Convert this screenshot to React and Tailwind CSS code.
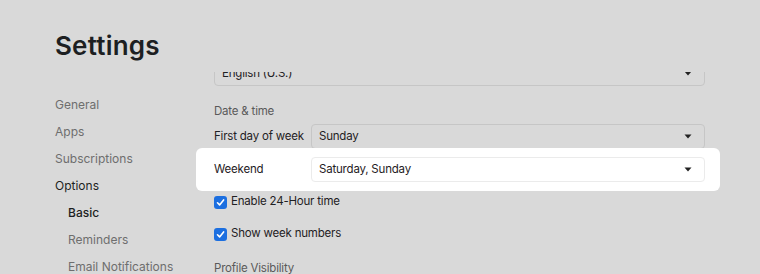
import React from 'react';

const Select = ({ value, white }) => (
  <div
    className={`flex-1 flex items-center justify-between h-[25px] rounded-[4px] border pl-[7px] pr-[12px] text-[11.5px] tracking-[-0.2px] text-[#1f2124] ${
      white ? 'bg-white border-[#ebebeb]' : 'bg-[#d9d9d9] border-[#c6c6c6]'
    }`}
  >
    <span>{value}</span>
    <svg width="8" height="5" viewBox="0 0 8 5">
      <path d="M0.5 0.5 L7.5 0.5 L4 4.5 Z" fill="#222" />
    </svg>
  </div>
);

const Check = ({ label }) => (
  <label className="flex items-center h-[20px] text-[11.5px] tracking-[-0.2px] text-[#1f2124]">
    <span className="w-[13px] h-[13px] rounded-[3px] bg-[#1c6fe0] flex items-center justify-center mr-[4px]">
      <svg width="9" height="9" viewBox="0 0 9 9">
        <path d="M1.5 4.8 L3.6 6.9 L7.6 1.9" stroke="white" strokeWidth="1.6" fill="none" strokeLinecap="round" strokeLinejoin="round" />
      </svg>
    </span>
    {label}
  </label>
);

const App = () => {
  const nav = [
    { name: 'General' },
    { name: 'Apps' },
    { name: 'Subscriptions' },
    { name: 'Options', active: true },
    { name: 'Basic', sub: true, active: true },
    { name: 'Reminders', sub: true },
    { name: 'Email Notifications', sub: true },
  ];

  return (
    <div
      className="w-[760px] h-[274px] bg-[#d9d9d9] overflow-hidden pl-[55px] pt-[30px]"
      style={{ fontFamily: 'Inter, "Noto Sans", sans-serif' }}
    >
      <h1 className="text-[26px] leading-[32px] font-semibold text-[#1d1f22] mb-[10px] tracking-[0.2px]">Settings</h1>

      <div className="flex">
        {/* Sidebar */}
        <nav className="w-[141px] pt-[23px] flex flex-col gap-[7px]">
          {nav.map((item) => (
            <div
              key={item.name}
              className={`h-[20px] leading-[20px] text-[12px] whitespace-nowrap ${item.sub ? 'pl-[13px]' : ''} ${
                item.active ? 'text-[#1d1f22]' : 'text-[#6e6e6e]'
              } ${item.sub && item.active ? 'font-medium' : ''}`}
            >
              {item.name}
            </div>
          ))}
        </nav>

        {/* Main content */}
        <div className="w-[524px] h-[202px] overflow-hidden">
          <div className="mt-[-11px] pl-[18px] pr-[15px] flex flex-col">
            <div className="flex">
              <Select value="English (U.S.)" />
            </div>

            <div className="mt-[15px] h-[20px] leading-[20px] text-[11.5px] tracking-[-0.2px] text-[#5a5a5a]">Date &amp; time</div>

            <div className="mt-[3px] flex items-center">
              <span className="w-[97px] flex-none whitespace-nowrap text-[11.5px] tracking-[-0.2px] text-[#1f2124]">First day of week</span>
              <Select value="Sunday" />
            </div>

            <div className="mt-[-1px] ml-[-18px] mr-[-15px] pl-[18px] pr-[15px] py-[9px] bg-white rounded-[6px] flex items-center">
              <span className="w-[97px] flex-none text-[11.5px] tracking-[-0.2px] text-[#1f2124]">Weekend</span>
              <Select value="Saturday, Sunday" white />
            </div>

            <div className="mt-[1px]">
              <Check label="Enable 24-Hour time" />
            </div>
            <div className="mt-[12px]">
              <Check label="Show week numbers" />
            </div>

            <div className="mt-[14px] h-[20px] leading-[20px] text-[11.5px] tracking-[-0.2px] text-[#5a5a5a]">Profile Visibility</div>
          </div>
        </div>
      </div>
    </div>
  );
};

export default App;
